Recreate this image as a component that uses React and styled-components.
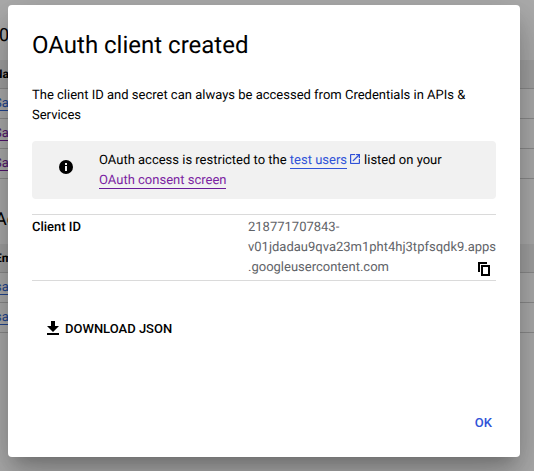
import React from "react";
import styled, { createGlobalStyle } from "styled-components";

const GlobalStyle = createGlobalStyle`
  * { box-sizing: border-box; }
  html, body { margin: 0; overflow: hidden; }
  body { font-family: Roboto, sans-serif; font-size: 13px; line-height: 20px; color: #000; text-rendering: geometricPrecision; }
`;

const Screen = styled.div`
  position: relative;
  width: 534px;
  height: 471px;
  overflow: hidden;
  background: #fff;
`;

const Page = styled.div`
  display: flex;
  flex-direction: column;
  height: 100%;
  overflow: hidden;
`;

const SectionTitle = styled.div`
  height: ${(p) => p.$height}px;
  padding-top: ${(p) => p.$top}px;
  margin-left: ${(p) => p.$shift}px;
  font-size: 18px;
  line-height: 24px;
  white-space: nowrap;
`;

const TableHead = styled.div`
  height: 29px;
  padding-top: 4px;
  text-indent: ${(p) => p.$shift}px;
  font-size: 12px;
  font-weight: 700;
  background: #f1f1f1;
  border-bottom: 1px solid #cfcfcf;
`;

const TableRow = styled.div`
  height: 30px;
  padding-top: 4px;
  border-bottom: 1px solid #cfcfcf;
`;

const RowLink = styled.a`
  display: block;
  width: fit-content;
  height: 18px;
  line-height: 22px;
  margin-left: ${(p) => p.$shift}px;
  color: ${(p) => (p.$visited ? "#7b1fa2" : "#3367d6")};
  border-bottom: 1px solid currentColor;
`;

const Backdrop = styled.div`
  position: absolute;
  inset: 0;
  padding: 5px 14px 14px 8px;
  background: rgba(0, 0, 0, 0.32);
`;

const Dialog = styled.section`
  display: flex;
  flex-direction: column;
  width: 512px;
  height: 452px;
  padding: 24px;
  background: #fff;
  border-radius: 4px;
  box-shadow: 0 11px 15px -7px rgba(0, 0, 0, 0.2), 0 24px 38px 3px rgba(0, 0, 0, 0.14),
    0 9px 46px 8px rgba(0, 0, 0, 0.12);
`;

const Title = styled.h1`
  margin: 0 0 25px;
  font-size: 24px;
  line-height: 32px;
  font-weight: 400;
`;

const Intro = styled.p`
  margin: 0 0 15px;
`;

const Notice = styled.div`
  display: flex;
  height: 58px;
  padding: 10px 27px 8px;
  margin-bottom: 15px;
  background: #f1f1f1;
  border-radius: 4px;
`;

const NoticeIcon = styled.svg`
  flex: none;
  width: 14px;
  height: 14px;
  margin: 9px 26px 0 0;
`;

const InlineLink = styled.a`
  display: inline-block;
  height: 18px;
  line-height: 20px;
  color: ${(p) => (p.$visited ? "#7b1fa2" : "#3053d8")};
  border-bottom: 1px solid ${(p) => (p.$visited ? "#6a1b9a" : "#3053d8")};
`;

const ExternalIcon = styled.svg`
  width: 10px;
  height: 10px;
  margin: 0 4px 0 3px;
  vertical-align: 0;
`;

const Property = styled.div`
  display: grid;
  grid-template-columns: 216px 248px;
  height: 67px;
  padding-top: 3px;
  border-top: 1px solid #dadada;
  border-bottom: 1px solid #dadada;
`;

const Label = styled.div`
  font-weight: 500;
`;

const Value = styled.div`
  color: #5f6368;
  white-space: nowrap;
`;

const LastLine = styled.div`
  display: flex;
  justify-content: space-between;
`;

const CopyIcon = styled.svg`
  width: 14px;
  height: 14px;
  margin: 4px 5px 0 0;
`;

const DownloadButton = styled.button`
  display: flex;
  align-items: center;
  gap: 6px;
  align-self: flex-start;
  height: 36px;
  margin: 30px 0 0 8px;
  padding: 0 7px;
  border: 0;
  background: none;
  color: #000;
  font: 500 13px/20px Roboto, sans-serif;
`;

const DownloadIcon = styled.svg`
  width: 12px;
  height: 14px;
  margin-bottom: 2px;
`;

const Actions = styled.div`
  display: flex;
  justify-content: flex-end;
  margin-top: auto;
  margin-bottom: -8px;
`;

const OkButton = styled.button`
  height: 36px;
  padding: 0 4px;
  border: 0;
  background: none;
  color: #3053d8;
  font: 500 13px/20px Roboto, sans-serif;
`;

export default function App() {
  return (
    <Screen>
      <GlobalStyle />
      <Page>
        <SectionTitle $height={60} $top={24} $shift={-1}>0</SectionTitle>
        <TableHead $shift={-6}>Na</TableHead>
        <TableRow><RowLink $shift={-6}>Sa</RowLink></TableRow>
        <TableRow><RowLink $shift={-6} $visited>Sa</RowLink></TableRow>
        <TableRow><RowLink $shift={-6} $visited>Sa</RowLink></TableRow>
        <SectionTitle $height={65} $top={29} $shift={-5}>Ac</SectionTitle>
        <TableHead $shift={-5}>Em</TableHead>
        <TableRow><RowLink $shift={-5}>sa</RowLink></TableRow>
        <TableRow><RowLink $shift={-5}>sa</RowLink></TableRow>
      </Page>
      <Backdrop>
        <Dialog role="dialog">
          <Title>OAuth client created</Title>
          <Intro>The client ID and secret can always be accessed from Credentials in APIs &amp; Services</Intro>
          <Notice>
            <NoticeIcon viewBox="0 0 14 14">
              <circle cx="7" cy="7" r="7" />
              <path d="M6 3h2v2H6zM6 6h2v5H6z" fill="#f1f1f1" />
            </NoticeIcon>
            <div>
              OAuth access is restricted to the <InlineLink>test users</InlineLink>
              <ExternalIcon viewBox="3 3 18 18" fill="#3053d8" stroke="#3053d8" strokeWidth="0.3">
                <path d="M19 19H5V5h7V3H5c-1.11 0-2 .9-2 2v14c0 1.1.89 2 2 2h14c1.1 0 2-.9 2-2v-7h-2v7zM14 3v2h3.59l-9.83 9.83 1.41 1.41L19 6.41V10h2V3h-7z" />
              </ExternalIcon>
              listed on your
              <br />
              <InlineLink $visited>OAuth consent screen</InlineLink>
            </div>
          </Notice>
          <Property>
            <Label>Client ID</Label>
            <Value>
              <div>218771707843-</div>
              <div>v01jdadau9qva23m1pht4hj3tpfsqdk9.apps</div>
              <LastLine>
                .googleusercontent.com
                <CopyIcon viewBox="0 0 14 14" fill="none" stroke="#000" strokeWidth="2">
                  <path d="M2 10V1h8" />
                  <path d="M5 4h7v9H5z" />
                </CopyIcon>
              </LastLine>
            </Value>
          </Property>
          <DownloadButton>
            <DownloadIcon viewBox="0 0 12 14">
              <path d="M4 0h4v5h4l-6 6-6-6h4zM0 12h12v2H0z" />
            </DownloadIcon>
            DOWNLOAD JSON
          </DownloadButton>
          <Actions>
            <OkButton>OK</OkButton>
          </Actions>
        </Dialog>
      </Backdrop>
    </Screen>
  );
}
